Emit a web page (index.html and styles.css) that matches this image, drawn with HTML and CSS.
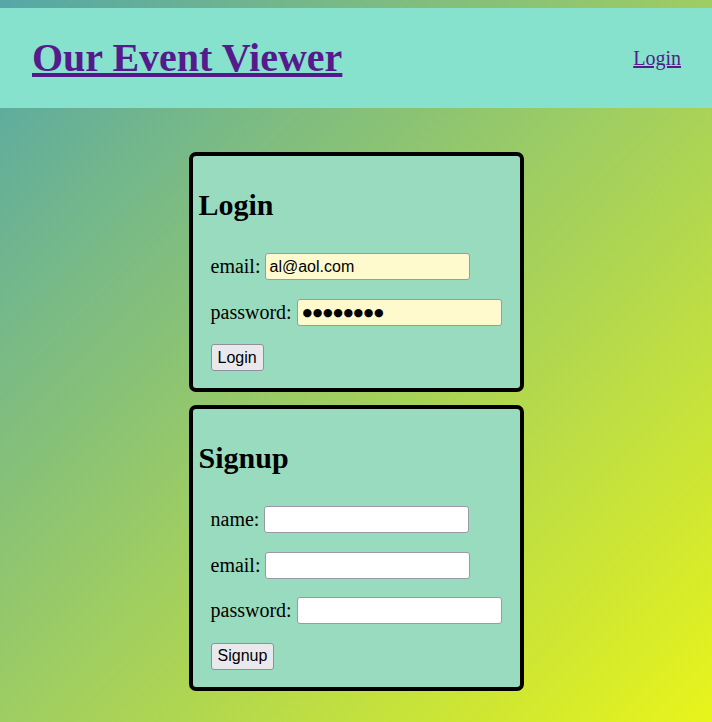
FILE: index.html
```html
<!DOCTYPE html>
<html lang="en">
<head>
<meta charset="utf-8">
<title>Our Event Viewer</title>
<link rel="stylesheet" href="styles.css">
</head>
<body>
<header class="site-header">
  <h1 class="site-title"><a href="#" class="title-link">Our Event Viewer</a></h1>
  <a href="#" class="nav-link">Login</a>
</header>
<main class="content">
  <section class="card">
    <h2 class="card-title">Login</h2>
    <form class="form">
      <div class="row"><label class="label">email:</label><input class="field filled" type="text" value="al@aol.com"></div>
      <div class="row"><label class="label">password:</label><input class="field filled dots" type="text" value="●●●●●●●●"></div>
      <div class="row"><button class="btn" type="button">Login</button></div>
    </form>
  </section>
  <section class="card">
    <h2 class="card-title">Signup</h2>
    <form class="form">
      <div class="row"><label class="label">name:</label><input class="field" type="text"></div>
      <div class="row"><label class="label">email:</label><input class="field" type="text"></div>
      <div class="row"><label class="label">password:</label><input class="field" type="password"></div>
      <div class="row"><button class="btn" type="button">Signup</button></div>
    </form>
  </section>
</main>
</body>
</html>
```
FILE: styles.css
```css
html {
  min-height: 100%;
  background: linear-gradient(to bottom right, #55a7a8 0%, #9ecd62 50%, #e8f41a 100%);
}
body {
  margin: 0;
  padding-top: 8px;
  font-family: "Liberation Serif", "Times New Roman", serif;
  color: #000;
}
.site-header {
  height: 100px;
  background: #86e2cc;
  display: flex;
  align-items: center;
  justify-content: space-between;
  padding: 0 31px 0 32px;
}
.site-title {
  margin: 0;
  font-size: 40px;
  font-weight: bold;
  line-height: 46px;
}
.title-link, .nav-link {
  color: #551a8b;
}
.nav-link {
  font-size: 20px;
  line-height: 23px;
}
.content {
  display: flex;
  flex-direction: column;
  align-items: center;
  gap: 13px;
  padding-top: 44px;
  padding-bottom: 32px;
}
.card {
  width: 335px;
  box-sizing: border-box;
  border: 4px solid #000;
  border-radius: 7px;
  background: #99dbbf;
  padding: 0 6px 17px;
}
.card-title {
  margin: 32px 0 0;
  font-size: 30px;
  line-height: 34px;
  font-weight: bold;
}
.form {
  display: flex;
  flex-direction: column;
  gap: 18.5px;
  margin-top: 31px;
  padding-left: 12px;
}
.row {
  display: flex;
  align-items: center;
  height: 27px;
  gap: 5px;
}
.label {
  font-size: 20px;
  line-height: 23px;
}
.field {
  box-sizing: border-box;
  width: 205px;
  height: 27px;
  margin: 0;
  padding: 1px 3px;
  border: 1px solid #999aa3;
  border-radius: 3px;
  background: #fff;
  font-family: "Liberation Sans", Arial, sans-serif;
  font-size: 16px;
  color: #000;
}
.field.filled {
  background: #fffacd;
}
.field.dots {
  padding-left: 5px;
  font-family: "DejaVu Sans", sans-serif;
  font-size: 11px;
  letter-spacing: 0.6px;
}
.btn {
  box-sizing: border-box;
  height: 27px;
  margin: 0;
  padding: 1px 6px;
  border: 1px solid #8f8f9d;
  border-radius: 3px;
  background: #e9e9ed;
  font-family: "Liberation Sans", Arial, sans-serif;
  font-size: 16px;
  color: #000;
}
```
